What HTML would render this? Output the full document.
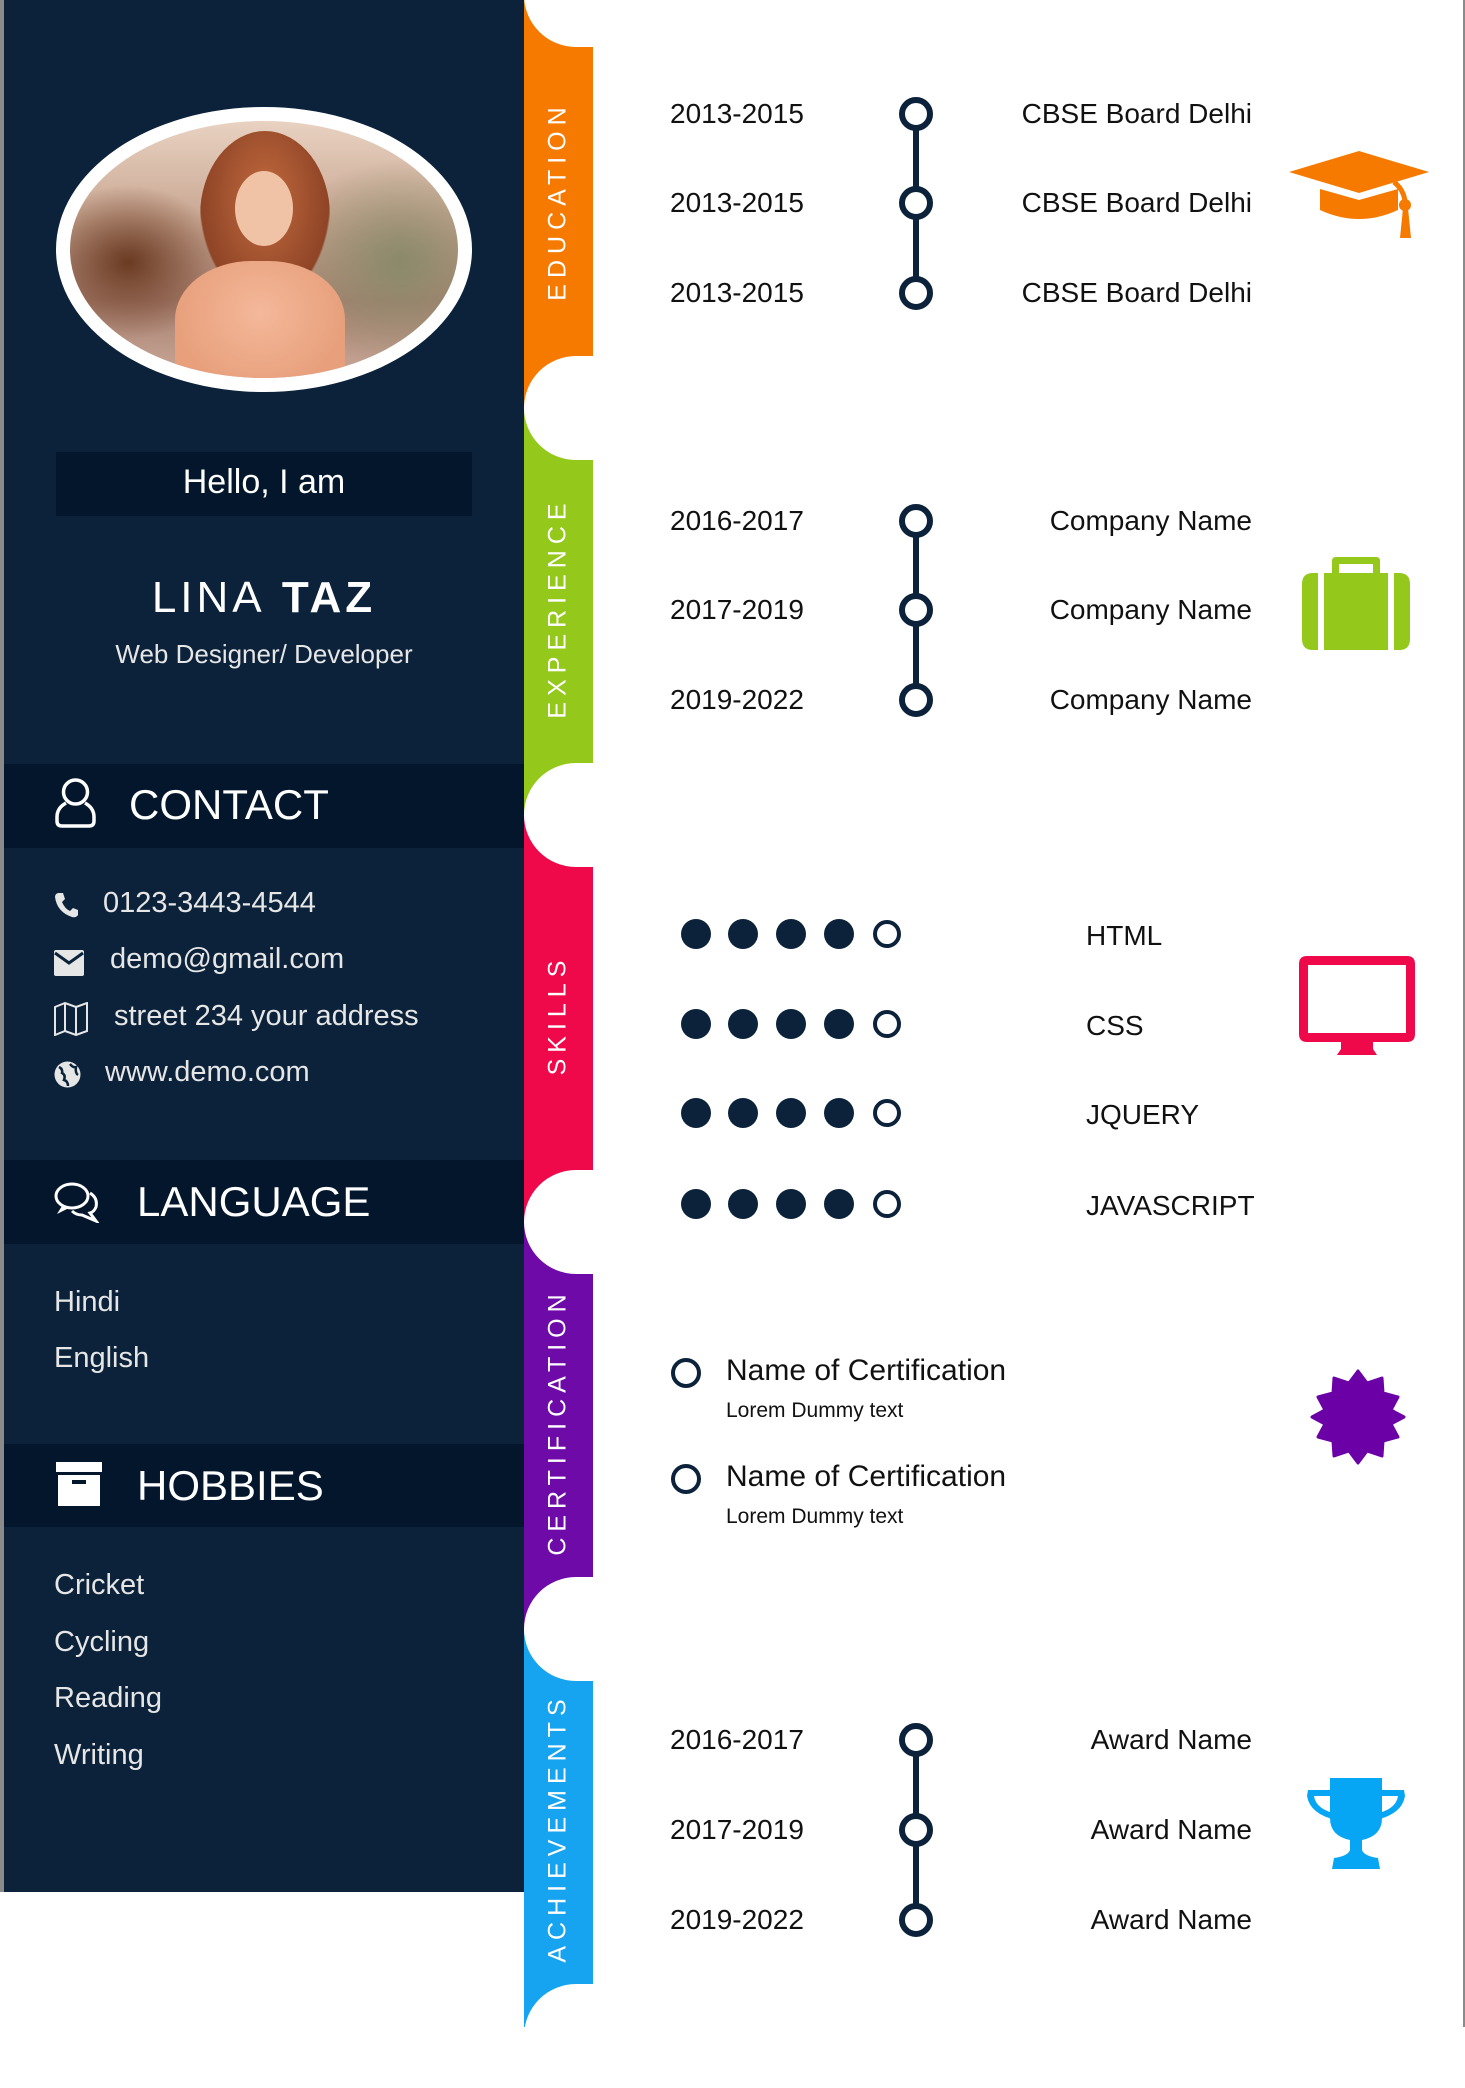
<!DOCTYPE html>
<html><head><meta charset="utf-8"><style>
*{margin:0;padding:0;box-sizing:border-box}
body{width:1465px;height:2027px;position:relative;background:#fff;font-family:"Liberation Sans",sans-serif;overflow:hidden}
.a{position:absolute}
#side{left:0;top:0;width:524px;height:1892px;background:#0b223a;border-left:4px solid #8a8a8a}
.band{left:4px;width:520px;background:#03162b}
.w{color:#fff}
.li{color:#e6e6e6;font-size:29px;white-space:nowrap}
.seg{left:524px;width:69px}
.notch{left:524px;width:90px;height:104px;background:#fff;border-radius:52px 0 0 52px}
.vt{color:#fff;font-size:25px;letter-spacing:6px;white-space:nowrap;transform:translate(-50%,-50%) rotate(-90deg);left:558px}
.d{font-size:28px;color:#111;white-space:nowrap;transform:translateY(-50%)}
.r{font-size:28px;color:#111;white-space:nowrap;transform:translateY(-50%);right:213px;text-align:right}
.c{width:34px;height:34px;border:6px solid #0b223a;border-radius:50%;background:#fff;transform:translate(-50%,-50%);left:916px}
.ln{left:913px;width:6px;background:#0b223a}
.dot{width:30px;height:30px;border-radius:50%;background:#0b223a;transform:translate(-50%,-50%)}
.ho{background:#fff;border:4px solid #0b223a;width:28px;height:28px}
.sk{font-size:28px;color:#111;left:1086px;transform:translateY(-50%)}
</style></head><body>
<div id="side" class="a"></div>
<!-- photo -->
<div class="a" style="left:56px;top:107px;width:416px;height:285px;border-radius:50%;background:#fff"></div>
<div class="a" style="left:70px;top:121px;width:388px;height:257px;border-radius:50%;overflow:hidden;background:radial-gradient(ellipse 30% 40% at 85% 55%,#8a8a6a,transparent),radial-gradient(ellipse 25% 30% at 15% 55%,#6b3a22,transparent),linear-gradient(180deg,#e9d2c2 0%,#c7a590 40%,#a88070 70%,#c9a898 100%)">
 <div class="a" style="left:130px;top:10px;width:130px;height:170px;border-radius:50% 50% 40% 40%;background:radial-gradient(ellipse at 50% 40%,#c26a3e,#8e4426 70%,transparent 72%)"></div>
 <div class="a" style="left:165px;top:50px;width:58px;height:75px;border-radius:50%;background:#f0c2a6"></div>
 <div class="a" style="left:105px;top:140px;width:170px;height:130px;border-radius:45% 45% 0 0;background:radial-gradient(ellipse at 50% 40%,#f4b89a,#e8a07c 70%)"></div>
</div>
<div class="a" style="left:56px;top:452px;width:416px;height:64px;background:#03162b"></div>
<div class="a w" style="left:56px;width:416px;top:463px;text-align:center;font-size:34px">Hello, I am</div>
<div class="a w" style="left:4px;width:520px;top:573px;text-align:center;font-size:44px;letter-spacing:4px"><span style="font-weight:300">LINA</span> <b>TAZ</b></div>
<div class="a" style="left:4px;width:520px;top:639px;text-align:center;font-size:26px;color:#e6e6e6">Web Designer/ Developer</div>

<div class="a band" style="top:764px;height:84px"></div>
<svg class="a" style="left:54px;top:777px" width="43" height="52" viewBox="0 0 43 52"><circle cx="21.5" cy="15" r="12" fill="none" stroke="#fff" stroke-width="3.5"/><path d="M12 26 Q3 31 3 40 L3 44 Q3 49 8 49 L35 49 Q40 49 40 44 L40 40 Q40 31 31 26" fill="none" stroke="#fff" stroke-width="3.5"/></svg>
<div class="a w" style="left:129px;top:781px;font-size:42px">CONTACT</div>

<svg class="a" style="left:54px;top:892px" width="24" height="26" viewBox="0 0 24 26"><path d="M4 1 L9 1 L11 7 L8 10 Q11 17 16 19 L19 16 L24 18 L24 23 Q22 26 18 25 Q3 20 1 5 Q1 2 4 1Z" fill="#e6e6e6"/></svg>
<div class="a li" style="left:103px;top:887px">0123-3443-4544</div>
<svg class="a" style="left:54px;top:950px" width="30" height="26" viewBox="0 0 30 26"><rect x="0" y="0" width="30" height="26" rx="2" fill="#e6e6e6"/><path d="M1 3 L15 13 L29 3" fill="none" stroke="#0b223a" stroke-width="3"/></svg>
<div class="a li" style="left:110px;top:943px">demo@gmail.com</div>
<svg class="a" style="left:54px;top:1002px" width="34" height="34" viewBox="0 0 34 34"><path d="M1 5 L11 1 L22 5 L33 1 L33 29 L22 33 L11 29 L1 33Z M11 1 L11 29 M22 5 L22 33" fill="none" stroke="#e6e6e6" stroke-width="2"/></svg>
<div class="a li" style="left:114px;top:1000px">street 234 your address</div>
<svg class="a" style="left:54px;top:1061px" width="27" height="27" viewBox="0 0 27 27"><circle cx="13.5" cy="13.5" r="13" fill="#e6e6e6"/><path d="M5 6 Q9 8 8 12 Q12 14 10 19 Q14 20 14 25 M16 3 Q19 7 22 6 Q21 12 24 14" fill="none" stroke="#0b223a" stroke-width="2.5"/></svg>
<div class="a li" style="left:105px;top:1056px">www.demo.com</div>

<div class="a band" style="top:1160px;height:84px"></div>
<svg class="a" style="left:54px;top:1181px" width="46" height="42" viewBox="0 0 46 42"><ellipse cx="18" cy="15" rx="16" ry="12" fill="none" stroke="#fff" stroke-width="3"/><path d="M8 25 L3 33 L15 27" fill="#fff"/><path d="M36 12 Q44 17 42 26 Q40 31 36 32 L42 40 L28 34 Q22 34 18 30" fill="none" stroke="#fff" stroke-width="3"/></svg>
<div class="a w" style="left:137px;top:1178px;font-size:42px">LANGUAGE</div>
<div class="a li" style="left:54px;top:1286px">Hindi</div>
<div class="a li" style="left:54px;top:1342px">English</div>

<div class="a band" style="top:1444px;height:83px"></div>
<svg class="a" style="left:56px;top:1462px" width="46" height="44" viewBox="0 0 46 44"><rect x="0" y="0" width="46" height="10" fill="#fff"/><rect x="2" y="13" width="42" height="31" fill="#fff"/><rect x="16" y="18" width="14" height="4" fill="#03162b"/></svg>
<div class="a w" style="left:137px;top:1462px;font-size:42px">HOBBIES</div>
<div class="a li" style="left:54px;top:1569px">Cricket</div>
<div class="a li" style="left:54px;top:1626px">Cycling</div>
<div class="a li" style="left:54px;top:1682px">Reading</div>
<div class="a li" style="left:54px;top:1739px">Writing</div>

<!-- strip -->
<div class="a seg" style="top:0;height:408px;background:#f77a00"></div>
<div class="a seg" style="top:408px;height:407px;background:#94c91c"></div>
<div class="a seg" style="top:815px;height:407px;background:#f0094a"></div>
<div class="a seg" style="top:1222px;height:407px;background:#6d0aa8"></div>
<div class="a seg" style="top:1629px;height:398px;background:#16a3f0"></div>
<div class="a notch" style="top:-57px"></div>
<div class="a notch" style="top:356px"></div>
<div class="a notch" style="top:763px"></div>
<div class="a notch" style="top:1170px"></div>
<div class="a notch" style="top:1577px"></div>
<div class="a notch" style="top:1984px"></div>
<div class="a vt" style="top:201px">EDUCATION</div>
<div class="a vt" style="top:608px">EXPERIENCE</div>
<div class="a vt" style="top:1015px">SKILLS</div>
<div class="a vt" style="top:1422px">CERTIFICATION</div>
<div class="a vt" style="top:1828px">ACHIEVEMENTS</div>
<div class="a" style="left:1463px;top:0;width:2px;height:2027px;background:#8a8a8a"></div>

<!-- education -->
<div class="a ln" style="top:114px;height:179px"></div>
<div class="a c" style="top:114px"></div><div class="a c" style="top:203px"></div><div class="a c" style="top:293px"></div>
<div class="a d" style="left:670px;top:114px">2013-2015</div>
<div class="a d" style="left:670px;top:203px">2013-2015</div>
<div class="a d" style="left:670px;top:293px">2013-2015</div>
<div class="a r" style="top:114px">CBSE Board Delhi</div>
<div class="a r" style="top:203px">CBSE Board Delhi</div>
<div class="a r" style="top:293px">CBSE Board Delhi</div>
<svg class="a" style="left:1289px;top:150px" width="140" height="95" viewBox="0 0 140 95"><path d="M0 22 L70 1 L140 22 L70 43Z" fill="#f77a00"/><path d="M31 39 L31 60 Q70 78 109 60 L109 39 L70 50Z" fill="#f77a00"/><path d="M105 32 Q115 40 116 52" fill="none" stroke="#f77a00" stroke-width="5"/><circle cx="116" cy="55" r="6" fill="#f77a00"/><path d="M114 58 L119 58 L122 88 L111 88Z" fill="#f77a00"/></svg>

<!-- experience -->
<div class="a ln" style="top:521px;height:179px"></div>
<div class="a c" style="top:521px"></div><div class="a c" style="top:610px"></div><div class="a c" style="top:700px"></div>
<div class="a d" style="left:670px;top:521px">2016-2017</div>
<div class="a d" style="left:670px;top:610px">2017-2019</div>
<div class="a d" style="left:670px;top:700px">2019-2022</div>
<div class="a r" style="top:521px">Company Name</div>
<div class="a r" style="top:610px">Company Name</div>
<div class="a r" style="top:700px">Company Name</div>
<svg class="a" style="left:1302px;top:556px" width="108" height="95" viewBox="0 0 108 95"><path d="M30 17 L30 5 Q30 1 34 1 L74 1 Q78 1 78 5 L78 17 L71 17 L71 8 L37 8 L37 17Z" fill="#94c91c"/><path d="M16 17 L16 94 L11 94 Q0 94 0 83 L0 28 Q0 17 11 17Z" fill="#94c91c"/><rect x="22" y="17" width="64" height="77" fill="#94c91c"/><path d="M92 17 L97 17 Q108 17 108 28 L108 83 Q108 94 97 94 L92 94Z" fill="#94c91c"/></svg>

<!-- skills -->
<div class="a dot" style="left:696px;top:934px"></div><div class="a dot" style="left:743px;top:934px"></div><div class="a dot" style="left:791px;top:934px"></div><div class="a dot" style="left:839px;top:934px"></div><div class="a dot ho" style="left:887px;top:934px"></div>
<div class="a dot" style="left:696px;top:1024px"></div><div class="a dot" style="left:743px;top:1024px"></div><div class="a dot" style="left:791px;top:1024px"></div><div class="a dot" style="left:839px;top:1024px"></div><div class="a dot ho" style="left:887px;top:1024px"></div>
<div class="a dot" style="left:696px;top:1113px"></div><div class="a dot" style="left:743px;top:1113px"></div><div class="a dot" style="left:791px;top:1113px"></div><div class="a dot" style="left:839px;top:1113px"></div><div class="a dot ho" style="left:887px;top:1113px"></div>
<div class="a dot" style="left:696px;top:1204px"></div><div class="a dot" style="left:743px;top:1204px"></div><div class="a dot" style="left:791px;top:1204px"></div><div class="a dot" style="left:839px;top:1204px"></div><div class="a dot ho" style="left:887px;top:1204px"></div>
<div class="a sk" style="top:936px">HTML</div>
<div class="a sk" style="top:1026px">CSS</div>
<div class="a sk" style="top:1115px">JQUERY</div>
<div class="a sk" style="top:1206px">JAVASCRIPT</div>
<svg class="a" style="left:1299px;top:956px" width="116" height="100" viewBox="0 0 116 100"><path d="M8 0 L108 0 Q116 0 116 8 L116 78 Q116 86 108 86 L8 86 Q0 86 0 78 L0 8 Q0 0 8 0Z M9 9 L9 77 L107 77 L107 9Z" fill="#f0094a" fill-rule="evenodd"/><path d="M42 86 L74 86 L74 93 L78 99 L38 99 L42 93Z" fill="#f0094a"/></svg>

<!-- certification -->
<div class="a" style="left:671px;top:1358px;width:30px;height:30px;border:4px solid #0b223a;border-radius:50%"></div>
<div class="a" style="left:726px;top:1354px;font-size:30px;color:#111">Name of Certification</div>
<div class="a" style="left:726px;top:1399px;font-size:21px;color:#111">Lorem Dummy text</div>
<div class="a" style="left:671px;top:1464px;width:30px;height:30px;border:4px solid #0b223a;border-radius:50%"></div>
<div class="a" style="left:726px;top:1460px;font-size:30px;color:#111">Name of Certification</div>
<div class="a" style="left:726px;top:1505px;font-size:21px;color:#111">Lorem Dummy text</div>
<svg class="a" style="left:1310px;top:1369px" width="96" height="96" viewBox="-48 -48 96 96"><polygon fill="#6a00a5" points="0,-46 9,-34 24,-39 25,-24 40,-20 33,-7 46,0 33,7 40,20 25,24 24,39 9,34 0,46 -9,34 -24,39 -25,24 -40,20 -33,7 -46,0 -33,-7 -40,-20 -25,-24 -24,-39 -9,-34" stroke="#6a00a5" stroke-width="3" stroke-linejoin="round"/></svg>

<!-- achievements -->
<div class="a ln" style="top:1740px;height:180px"></div>
<div class="a c" style="top:1740px"></div><div class="a c" style="top:1830px"></div><div class="a c" style="top:1920px"></div>
<div class="a d" style="left:670px;top:1740px">2016-2017</div>
<div class="a d" style="left:670px;top:1830px">2017-2019</div>
<div class="a d" style="left:670px;top:1920px">2019-2022</div>
<div class="a r" style="top:1740px">Award Name</div>
<div class="a r" style="top:1830px">Award Name</div>
<div class="a r" style="top:1920px">Award Name</div>
<svg class="a" style="left:1306px;top:1778px" width="100" height="92" viewBox="0 0 100 92"><path d="M24 0 L76 0 L76 40 Q76 58 56 62 L56 72 Q58 78 72 80 L74 91 L26 91 L28 80 Q42 78 44 72 L44 62 Q24 58 24 40Z" fill="#07a6f5"/><path d="M24 12 L2 12 L1 18 Q4 36 30 42 L32 36 Q10 32 8 18 L24 18Z M76 12 L98 12 L99 18 Q96 36 70 42 L68 36 Q90 32 92 18 L76 18Z" fill="#07a6f5"/></svg>
</body></html>
